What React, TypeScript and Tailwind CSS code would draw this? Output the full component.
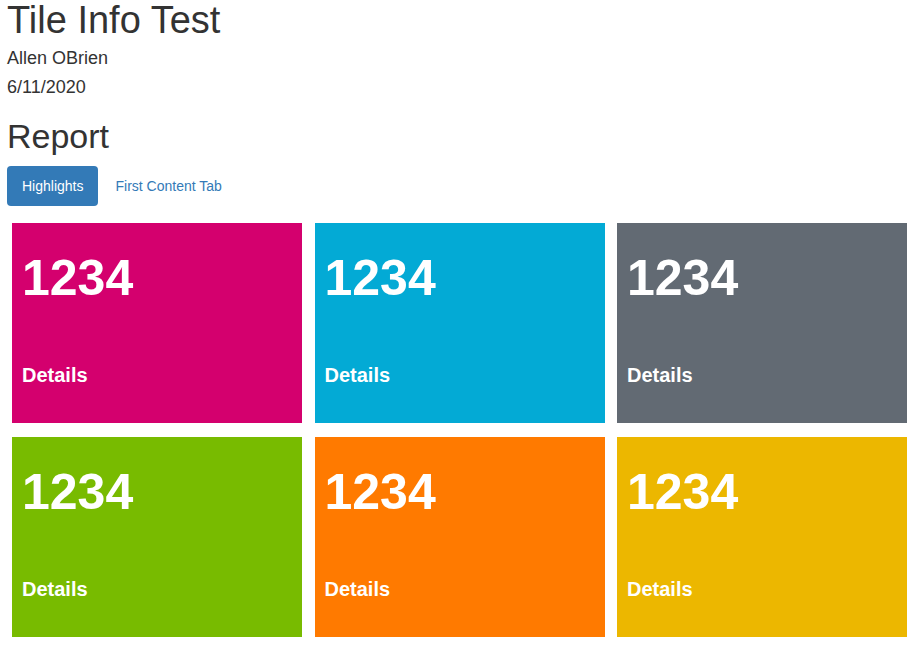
import React from "react";

const tiles = [
  "bg-[#d4006e]",
  "bg-[#03aad5]",
  "bg-[#626a73]",
  "bg-[#78bb00]",
  "bg-[#ff7a00]",
  "bg-[#ecb700]",
];

function Tile({ color }: { color: string }) {
  return (
    <div className={`${color} h-[200px] w-[290px] flex flex-col text-white pl-[10px]`}>
      <div className="mt-[27px] text-[50px] font-bold leading-[56px]">1234</div>
      <div className="mt-auto mb-[37px] text-[20px] font-bold leading-[22px]">Details</div>
    </div>
  );
}

export default function App() {
  return (
    <div
      className="bg-white min-h-[648px] pl-[7px] text-[#333]"
      style={{ fontFamily: '"Liberation Sans", Arial, sans-serif' }}
    >
      <h1 className="text-[38px] leading-[40px] font-normal">Tile Info Test</h1>
      <div className="mt-[4px] text-[18px] leading-[29px]">Allen OBrien</div>
      <div className="text-[18px] leading-[29px]">6/11/2020</div>
      <h2 className="mt-[16px] text-[34px] leading-[36px] font-normal">Report</h2>
      <div className="mt-[12px] flex text-[14px] leading-[20px]">
        <div className="bg-[#337ab7] text-white rounded-[4px] px-[15px] py-[10px]">Highlights</div>
        <div className="ml-[2px] text-[#337ab7] px-[15px] py-[10px]">First Content Tab</div>
      </div>
      <div className="ml-[5px] mt-[17px] grid grid-cols-[290px_290px_290px] gap-x-[12.5px] gap-y-[14px]">
        {tiles.map((c, i) => (
          <Tile key={i} color={c} />
        ))}
      </div>
    </div>
  );
}
